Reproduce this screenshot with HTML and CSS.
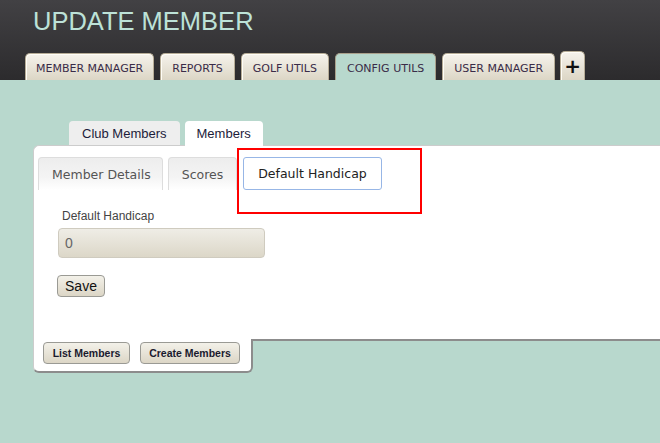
FILE: index.html
```html
<!DOCTYPE html>
<html>
<head>
<meta charset="utf-8">
<link rel="stylesheet" href="styles.css">
</head>
<body>
<header class="header">
  <h1 class="title">UPDATE MEMBER</h1>
  <nav class="topnav">
    <a class="toptab first">MEMBER MANAGER</a>
    <a class="toptab">REPORTS</a>
    <a class="toptab">GOLF UTILS</a>
    <a class="toptab active">CONFIG UTILS</a>
    <a class="toptab">USER MANAGER</a>
    <a class="toptab plus">+</a>
  </nav>
</header>
<main class="main">
  <div class="subtabs">
    <div class="subtab">Club Members</div>
    <div class="subtab active">Members</div>
  </div>
  <section class="panel">
    <div class="innertabs">
      <div class="innertab first">Member Details</div>
      <div class="innertab scores">Scores</div>
      <div class="innertab active">Default Handicap</div>
    </div>
    <form class="form">
      <label class="label">Default Handicap</label>
      <div class="input">0</div>
      <button type="button" class="save">Save</button>
    </form>
  </section>
  <div class="footer">
    <button type="button" class="fbtn list">List Members</button>
    <button type="button" class="fbtn create">Create Members</button>
  </div>
</main>
<div class="highlight"></div>
</body>
</html>
```

FILE: styles.css
```css
html, body {
  margin: 0;
  padding: 0;
}
body {
  width: 660px;
  height: 443px;
  overflow: hidden;
  background: #b8d8cd;
  font-family: "Liberation Sans", Arial, sans-serif;
  position: relative;
}
.header {
  height: 80px;
  background: linear-gradient(#424144, #2c2b2d);
  padding-left: 25px;
  box-sizing: border-box;
  display: flex;
  flex-direction: column;
}
.title {
  margin: 0 0 0 8px;
  padding-top: 6px;
  font-size: 25.5px;
  line-height: 30px;
  font-weight: normal;
  color: #bde2d8;
}
.topnav {
  display: flex;
  align-items: flex-end;
  gap: 6px;
  margin-top: auto;
}
.toptab {
  height: 27px;
  box-sizing: border-box;
  padding: 2px 11px 0;
  display: flex;
  align-items: center;
  white-space: nowrap;
  font-family: Verdana, "DejaVu Sans", sans-serif;
  font-size: 11px;
  color: #3a2b48;
  background: linear-gradient(#f6f3ec, #dcd6c5);
  border: 1px solid #b7ad97;
  border-bottom: none;
  border-radius: 5px 5px 0 0;
  box-shadow: inset 1px 1px 0 #fffdf6;
}
.toptab.first {
  padding: 2px 10px 0;
}
.toptab.active {
  background: #b8d8cd;
  box-shadow: none;
  border-color: #a9a08b;
}
.toptab.plus {
  height: 29px;
  width: 25px;
  padding: 0;
  justify-content: center;
  font-family: "DejaVu Sans", sans-serif;
  font-weight: bold;
  font-size: 20px;
  color: #111;
  margin-left: -1px;
}
.main {
  padding: 41px 0 0 33px;
}
.subtabs {
  display: flex;
  gap: 5px;
  margin-left: 36px;
  height: 24px;
  position: relative;
  z-index: 2;
}
.subtab {
  height: 24px;
  box-sizing: border-box;
  padding: 4px 13px 0;
  font-size: 13px;
  line-height: 18px;
  white-space: nowrap;
  color: #1c1c3a;
  background: #eeeeee;
  border-radius: 4px 4px 0 0;
}
.subtab.active {
  background: #ffffff;
  height: 25px;
  padding: 4px 12px 0;
}
.panel {
  width: 627px;
  height: 196px;
  box-sizing: border-box;
  background: #fff;
  border-top: 1px solid #cccccc;
  border-left: 1px solid #cccccc;
  border-bottom: 2px solid #8c8c8c;
  border-radius: 6px 0 0 0;
  padding: 11px 0 0 4px;
}
.innertabs {
  display: flex;
  gap: 5px;
}
.innertab {
  height: 33px;
  box-sizing: border-box;
  padding: 0 13px;
  display: flex;
  align-items: center;
  white-space: nowrap;
  font-family: Verdana, "DejaVu Sans", sans-serif;
  font-size: 12.5px;
  color: #555;
  background: linear-gradient(#ededed, #f4f4f4 60%, #ffffff);
  border: 1px solid #dddddd;
  border-bottom: none;
  border-radius: 4px 4px 0 0;
}
.innertab.first {
  padding: 0 12px 0 13px;
  width: 125px;
}
.innertab.scores {
  width: 69px;
  justify-content: center;
  padding: 0;
}
.innertab.active {
  margin-left: 1px;
  width: 139px;
  justify-content: center;
  padding: 0;
  background: #fff;
  color: #222;
  border: 1px solid #97b6e6;
  border-radius: 3px;
}
.form {
  margin: 0;
  padding: 19px 0 0 20px;
  display: flex;
  flex-direction: column;
  align-items: flex-start;
}
.label {
  margin-left: 4px;
  font-size: 12px;
  line-height: 14px;
  color: #444;
}
.input {
  margin-top: 5px;
  width: 207px;
  height: 30px;
  box-sizing: border-box;
  padding: 0 6px;
  display: flex;
  align-items: center;
  font-size: 14px;
  color: #666;
  background: linear-gradient(#efede6, #dcd7c8);
  border: 1px solid #cfcbbf;
  border-radius: 4px;
}
.save {
  margin-top: 17px;
  margin-left: -1px;
  width: 48px;
  height: 22px;
  padding: 0;
  font-family: "Liberation Sans", Arial, sans-serif;
  font-size: 14px;
  color: #111;
  background: linear-gradient(#f3f1e9, #dcd6c6);
  border: 1px solid #9a9a94;
  border-radius: 4px;
}
.footer {
  width: 220px;
  height: 34px;
  box-sizing: border-box;
  margin-top: -2px;
  background: #fff;
  border-left: 1px solid #cccccc;
  border-right: 2px solid #8c8c8c;
  border-bottom: 2px solid #8c8c8c;
  border-radius: 0 0 6px 6px;
  padding: 3px 0 0 9px;
  display: flex;
  gap: 10px;
  align-items: flex-start;
}
.fbtn {
  flex: none;
  height: 22px;
  padding: 0;
  white-space: nowrap;
  font-family: "Liberation Sans", Arial, sans-serif;
  font-size: 10.5px;
  font-weight: bold;
  color: #1a1a2e;
  background: linear-gradient(#f3f1e9, #dcd6c6);
  border: 1px solid #9a9a94;
  border-radius: 4px;
}
.fbtn.list {
  width: 87px;
}
.fbtn.create {
  width: 100px;
}
.highlight {
  position: absolute;
  left: 237px;
  top: 148px;
  width: 185px;
  height: 66px;
  box-sizing: border-box;
  border: 2px solid #ff0000;
}
```
